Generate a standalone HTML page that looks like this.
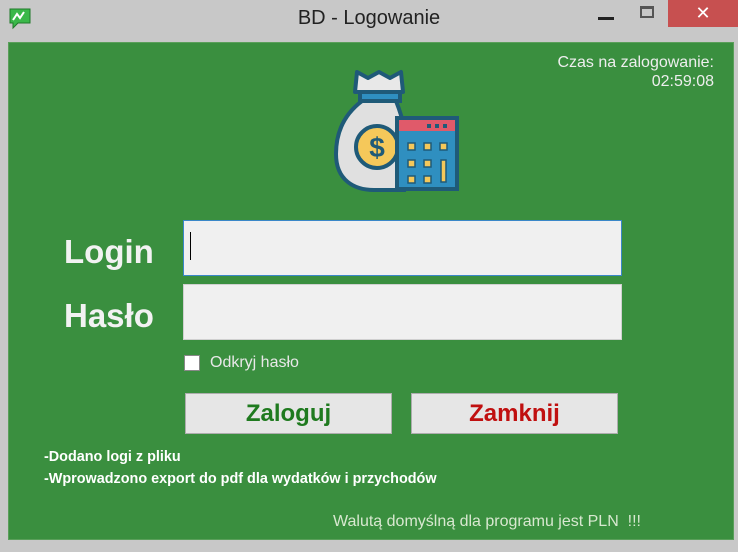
<!DOCTYPE html>
<html><head><style>
body{margin:0;width:738px;height:552px;background:#c8c8c8;position:relative;overflow:hidden;font-family:"Liberation Sans",sans-serif}
.abs{position:absolute}
#g{left:8px;top:42px;width:726px;height:498px;background:#3a8f3f;border:1px solid #5a9f5a;box-sizing:border-box}
.lbl{color:#f2f2f2;font-weight:bold;font-size:33px}
.inp{left:183px;width:439px;height:56px;background:#f0f0f0;box-sizing:border-box;border:1px solid #d0d0d0}
.btn{top:393px;width:207px;height:41px;background:#e6e6e6;border:1px solid #adadad;box-sizing:border-box;text-align:center;font-weight:bold;font-size:24px;line-height:39px}
.note{color:#fff;font-weight:bold;font-size:14.4px;left:44px}
</style></head><body>
<svg class="abs" style="left:8px;top:6px" width="24" height="24" viewBox="0 0 24 24"><path d="M2 3h20v14H10l-5 5v-5H2z" fill="#3bb84a" stroke="#1f7a2a"/><path d="M5 14l4-6 3 4 4-6" fill="none" stroke="#fff" stroke-width="2"/></svg>
<div class="abs" style="left:0;width:738px;top:7px;text-align:center;font-size:20px;color:#222">BD - Logowanie</div>
<div class="abs" style="left:598px;top:17px;width:16px;height:3px;background:#222"></div>
<div class="abs" style="left:640px;top:6px;width:14px;height:12px;border:2px solid #555;border-top-width:3px;box-sizing:border-box"></div>
<div class="abs" style="left:668px;top:0;width:70px;height:27px;background:#c75050;color:#fff;text-align:center;font-size:18px;line-height:27px">✕</div>
<div class="abs" id="g"></div>
<div class="abs" style="right:24px;top:53px;color:#eee;font-size:16px;text-align:right;line-height:19px">Czas na zalogowanie:<br>02:59:08</div>
<svg class="abs" style="left:332px;top:68px" width="130" height="128" viewBox="0 0 130 128">
<path d="M25 4l11 6 11-6 11 6 11-6 2 20H23z" fill="#e8e8e8" stroke="#1f5a78" stroke-width="4" stroke-linejoin="round"/>
<rect x="28" y="24" width="40" height="9" fill="#2f8fc0" stroke="#1f5a78" stroke-width="4"/>
<path d="M30 33C14 45 4 62 4 86c0 26 18 36 38 36h30V60C70 48 66 38 64 33z" fill="#e0e0e0" stroke="#1f5a78" stroke-width="4"/>
<circle cx="45" cy="79" r="21" fill="#f5c85a" stroke="#1f5a78" stroke-width="4"/>
<text x="45" y="89" font-size="28" font-weight="bold" text-anchor="middle" fill="#1f5a78" font-family="Liberation Sans">$</text>
<rect x="65" y="50" width="60" height="71" fill="#2f8fc0" stroke="#1f5a78" stroke-width="4"/>
<rect x="67" y="52" width="56" height="11" fill="#e05a6a"/>
<g fill="#f5c85a" stroke="#1f5a78" stroke-width="1.5">
<rect x="76" y="75" width="7" height="7"/><rect x="92" y="75" width="7" height="7"/><rect x="108" y="75" width="7" height="7"/>
<rect x="76" y="92" width="7" height="7"/><rect x="92" y="92" width="7" height="7"/><rect x="109" y="92" width="5" height="22"/>
<rect x="76" y="108" width="7" height="7"/><rect x="92" y="108" width="7" height="7"/></g>
<g fill="#1f5a78"><rect x="95" y="56" width="4" height="4"/><rect x="103" y="56" width="4" height="4"/><rect x="111" y="56" width="4" height="4"/></g>
</svg>
<div class="abs lbl" style="left:64px;top:233px">Login</div>
<div class="abs lbl" style="left:64px;top:297px">Hasło</div>
<div class="abs inp" style="top:220px;border-color:#3a87c8"></div>
<div class="abs" style="left:190px;top:232px;width:1px;height:28px;background:#000"></div>
<div class="abs inp" style="top:284px"></div>
<div class="abs" style="left:184px;top:355px;width:16px;height:16px;background:#fff;border:1px solid #888;box-sizing:border-box"></div>
<div class="abs" style="left:210px;top:354px;color:#e8e8e8;font-size:16px">Odkryj hasło</div>
<div class="abs btn" style="left:185px;color:#1f7a1f">Zaloguj</div>
<div class="abs btn" style="left:411px;color:#c01010">Zamknij</div>
<div class="abs note" style="top:449px">-Dodano logi z pliku</div>
<div class="abs note" style="top:471px">-Wprowadzono export do pdf dla wydatków i przychodów</div>
<div class="abs" style="left:333px;top:513px;color:#d8e8d0;font-size:16px">Walutą domyślną dla programu jest PLN &nbsp;!!!</div>
</body></html>
